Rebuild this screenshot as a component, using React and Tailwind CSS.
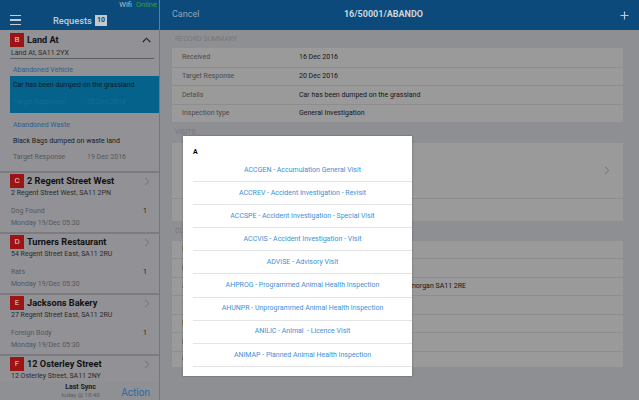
import React from "react";

function ChevronRight({ className = "" }) {
  return (
    <svg width="6" height="9" viewBox="0 0 6 9" className={className}>
      <path d="M1 0.8 L4.8 4.5 L1 8.2" fill="none" stroke="#6f7074" strokeWidth="1" />
    </svg>
  );
}

function ChevronUp() {
  return (
    <svg width="9" height="6" viewBox="0 0 9 6">
      <path d="M0.8 5 L4.5 1.2 L8.2 5" fill="none" stroke="#222" strokeWidth="1.1" />
    </svg>
  );
}

function Badge({ letter }) {
  return (
    <div className="w-[14px] h-[14px] bg-[#9c1414] text-[#e8c8c8] text-[8px] leading-none flex items-center justify-center shrink-0">
      {letter}
    </div>
  );
}

function ListItem({ letter, title, addr, type, count }) {
  return (
    <div className="bg-[#929296] pt-[1px] pb-[3px] border-b-2 border-[#7b7b80]">
      <div className="flex items-center h-[14px] pl-[10px] pr-[9px]">
        <Badge letter={letter} />
        <div className="ml-[3px] flex-1 text-[9.2px] font-bold text-[#111] whitespace-nowrap">{title}</div>
        <ChevronRight />
      </div>
      <div className="h-[10px] leading-[10px] pl-[11px] text-[7px] text-[#2a2a2a] whitespace-nowrap">{addr}</div>
      {type && (
        <>
          <div className="mt-[7px] h-[12px] flex items-center justify-between pl-[11px] pr-[12px] text-[7px] text-[#55565a]">
            <span>{type}</span>
            <span className="text-[#1a1a1a]">{count}</span>
          </div>
          <div className="h-[12px] leading-[12px] pl-[11px] text-[7px] text-[#55565a]">Monday 19/Dec 05:30</div>
        </>
      )}
    </div>
  );
}

function RecordRow({ label, value, first, h = "h-[18.5px]" }) {
  return (
    <div className={`${h} flex items-center text-[7px] ${first ? "" : "border-t border-[#8d8d8d]"}`}>
      <div className="w-[127px] pl-[10px] text-[#4a4a4a]">{label}</div>
      <div className="text-[#151515] whitespace-nowrap">{value}</div>
    </div>
  );
}

const modalItems = [
  "ACCGEN - Accumulation General Visit",
  "ACCREV - Accident Investigation - Revisit",
  "ACCSPE - Accident Investigation - Special Visit",
  "ACCVIS - Accident Investigation - Visit",
  "ADVISE - Advisory Visit",
  "AHPROG - Programmed Animal Health Inspection",
  "AHUNPR - Unprogrammed Animal Health Inspection",
  "ANILIC - Animal  - Licence Visit",
  "ANIMAP - Planned Animal Health Inspection",
];

export default function App() {
  return (
    <div className="relative w-[639px] h-[400px] overflow-hidden flex bg-[#8e8f93] font-[Roboto,sans-serif]">
      {/* Left panel */}
      <div className="w-[160px] h-full flex flex-col border-r border-[#76777b] bg-[#8e8f93]">
        <div className="h-[30px] bg-[#0b4a7a] shrink-0 flex flex-col">
          <div className="h-[11px] flex justify-end items-start pr-[2px] text-[7.5px] leading-[10px]">
            <span className="text-[#b8c0c8]">Wifi</span>
            <span className="ml-[4px] text-[#2fa82f]">Online</span>
          </div>
          <div className="h-[19px] flex items-center">
            <div className="ml-[10px] w-[11px] flex flex-col gap-[2.7px] mb-[1px]">
              <div className="h-[1.7px] bg-[#c5ced8]" />
              <div className="h-[1.7px] bg-[#c5ced8]" />
              <div className="h-[1.7px] bg-[#c5ced8]" />
            </div>
            <div className="ml-[32px] text-[9.3px] text-[#c3ceda] font-medium">Requests</div>
            <div className="ml-[3px] w-[12px] h-[11px] bg-[#c4c9ce] text-[#0b4a7a] text-[7px] font-bold flex items-center justify-center">10</div>
          </div>
        </div>

        <div className="flex-1 overflow-hidden">
          {/* Expanded item B */}
          <div className="bg-[#929296] pt-[3px] pb-[8px] border-b-2 border-[#7b7b80]">
            <div className="flex items-center h-[14px] pl-[10px] pr-[8px]">
              <Badge letter="B" />
              <div className="ml-[3px] flex-1 text-[9.2px] font-bold text-[#111]">Land At</div>
              <ChevronUp />
            </div>
            <div className="mt-[1px] h-[10px] leading-[10px] pl-[11px] text-[7px] text-[#2a2a2a]">Land At, SA11 2YX</div>
            <div className="ml-[10px] mr-[5px] h-px bg-[#5f6064]" />
            <div className="mt-[5px] h-[12px] leading-[12px] pl-[13px] text-[7px] text-[#2d5e8c]">Abandoned Vehicle</div>
            <div className="ml-[10px] bg-[#05628a] pt-[3px] pb-[5px]">
              <div className="h-[12px] leading-[12px] pl-[3px] text-[7px] text-[#0c1c26]">Car has been dumped on the grassland</div>
              <div className="mt-[5px] h-[12px] leading-[12px] pl-[3px] text-[7px] text-[#0e6f99] flex">
                <span className="w-[74px]">Target Response</span>
                <span>20 Dec 2016</span>
              </div>
            </div>
            <div className="mt-[6px] h-[12px] leading-[12px] pl-[13px] text-[7px] text-[#2d5e8c]">Abandoned Waste</div>
            <div className="mt-[4px] h-[12px] leading-[12px] pl-[13px] text-[7px] text-[#1a1a1a]">Black Bags dumped on waste land</div>
            <div className="mt-[4px] h-[12px] leading-[12px] pl-[13px] text-[7px] text-[#55565a] flex">
              <span className="w-[74px]">Target Response</span>
              <span>19 Dec 2016</span>
            </div>
          </div>
          <ListItem letter="C" title="2 Regent Street West" addr="2 Regent Street West, SA11 2PN" type="Dog Found" count="1" />
          <ListItem letter="D" title="Turners Restaurant" addr="54 Regent Street East, SA11 2RU" type="Rats" count="1" />
          <ListItem letter="E" title="Jacksons Bakery" addr="27 Regent Street East, SA11 2RU" type="Foreign Body" count="1" />
          <ListItem letter="F" title="12 Osterley Street" addr="12 Osterley Street, SA11 2NY" />
        </div>

        <div className="h-[18px] shrink-0 bg-[#8f9094] flex items-center relative">
          <div className="flex-1 flex flex-col items-center leading-none pl-[2px]">
            <span className="text-[7px] font-bold text-[#1a1a1a]">Last Sync</span>
            <span className="mt-[1px] text-[6px] text-[#5a5b5f]">today @ 18:40</span>
          </div>
          <div className="absolute right-[9px] top-[3px] text-[10px] text-[#2a6aa6]">Action</div>
        </div>
      </div>

      {/* Right panel */}
      <div className="flex-1 h-full flex flex-col">
        <div className="h-[30px] bg-[#0b4a7a] shrink-0 flex items-center">
          <div className="pl-[12px] w-[60px] text-[9px] text-[#8ea6c0]">Cancel</div>
          <div className="flex-1 text-center pr-[62px] text-[9px] font-bold text-[#cdd6df]">16/50001/ABANDO</div>
          <div className="w-[30px] flex justify-center">
            <svg width="9" height="9" viewBox="0 0 9 9">
              <path d="M4.5 0.5 V8.5 M0.5 4.5 H8.5" stroke="#c0c9d2" strokeWidth="1.2" />
            </svg>
          </div>
        </div>

        <div className="pl-[12px] pr-[16px]">
          <div className="h-[18px] flex items-center pl-[3px] text-[7px] text-[#76777c]">RECORD SUMMARY</div>
          <div className="bg-[#9a9a9a]">
            <RecordRow first label="Received" value="16 Dec 2016" />
            <RecordRow label="Target Response" value="20 Dec 2016" />
            <RecordRow label="Details" value="Car has been dumped on the grassland" />
            <RecordRow label="Inspection type" value="General Investigation" />
          </div>

          <div className="h-[21px] flex items-center pl-[3px] text-[7px] text-[#76777c]">VISITS</div>
          <div className="bg-[#9a9a9a]">
            <div className="h-[55px] flex items-center justify-end pr-[13px]">
              <ChevronRight />
            </div>
            <div className="h-[23px] border-t border-[#8d8d8d]" />
          </div>

          <div className="h-[20px] flex items-center pl-[3px] text-[7px] text-[#76777c]">CUSTOMER</div>
          <div className="bg-[#9a9a9a]">
            <RecordRow first h="h-[17px]" label="Name" value="Mr J Smith" />
            <RecordRow h="h-[18.5px]" label="Reference" value="" />
            <RecordRow h="h-[18.5px]" label="Address" value="112A Regent Street East, Neath, Glamorgan SA11 2RE" />
            <RecordRow h="h-[18.5px]" label="Telephone" value="" />
            <RecordRow h="h-[18.5px]" label="Mobile" value="" />
            <RecordRow h="h-[18.5px]" label="Email" value="" />
            <RecordRow h="h-[16px]" label="Contact" value="" />
          </div>
        </div>
      </div>

      {/* Modal */}
      <div className="absolute left-[183px] top-[136px] w-[229px] h-[240px] bg-white overflow-hidden shadow-[0_0_2px_rgba(0,0,0,0.35)]">
        <div className="h-[23px] pt-[11px] pl-[10px] text-[7px] leading-[10px] font-bold text-black">A</div>
        <div className="pl-[10px]">
          {modalItems.map((t, i) => (
            <div
              key={i}
              className="h-[23.1px] border-b border-[#e4e4e4] flex items-center justify-center text-[7px] text-[#3d8fd6] whitespace-pre"
            >
              {t}
            </div>
          ))}
        </div>
      </div>
    </div>
  );
}
